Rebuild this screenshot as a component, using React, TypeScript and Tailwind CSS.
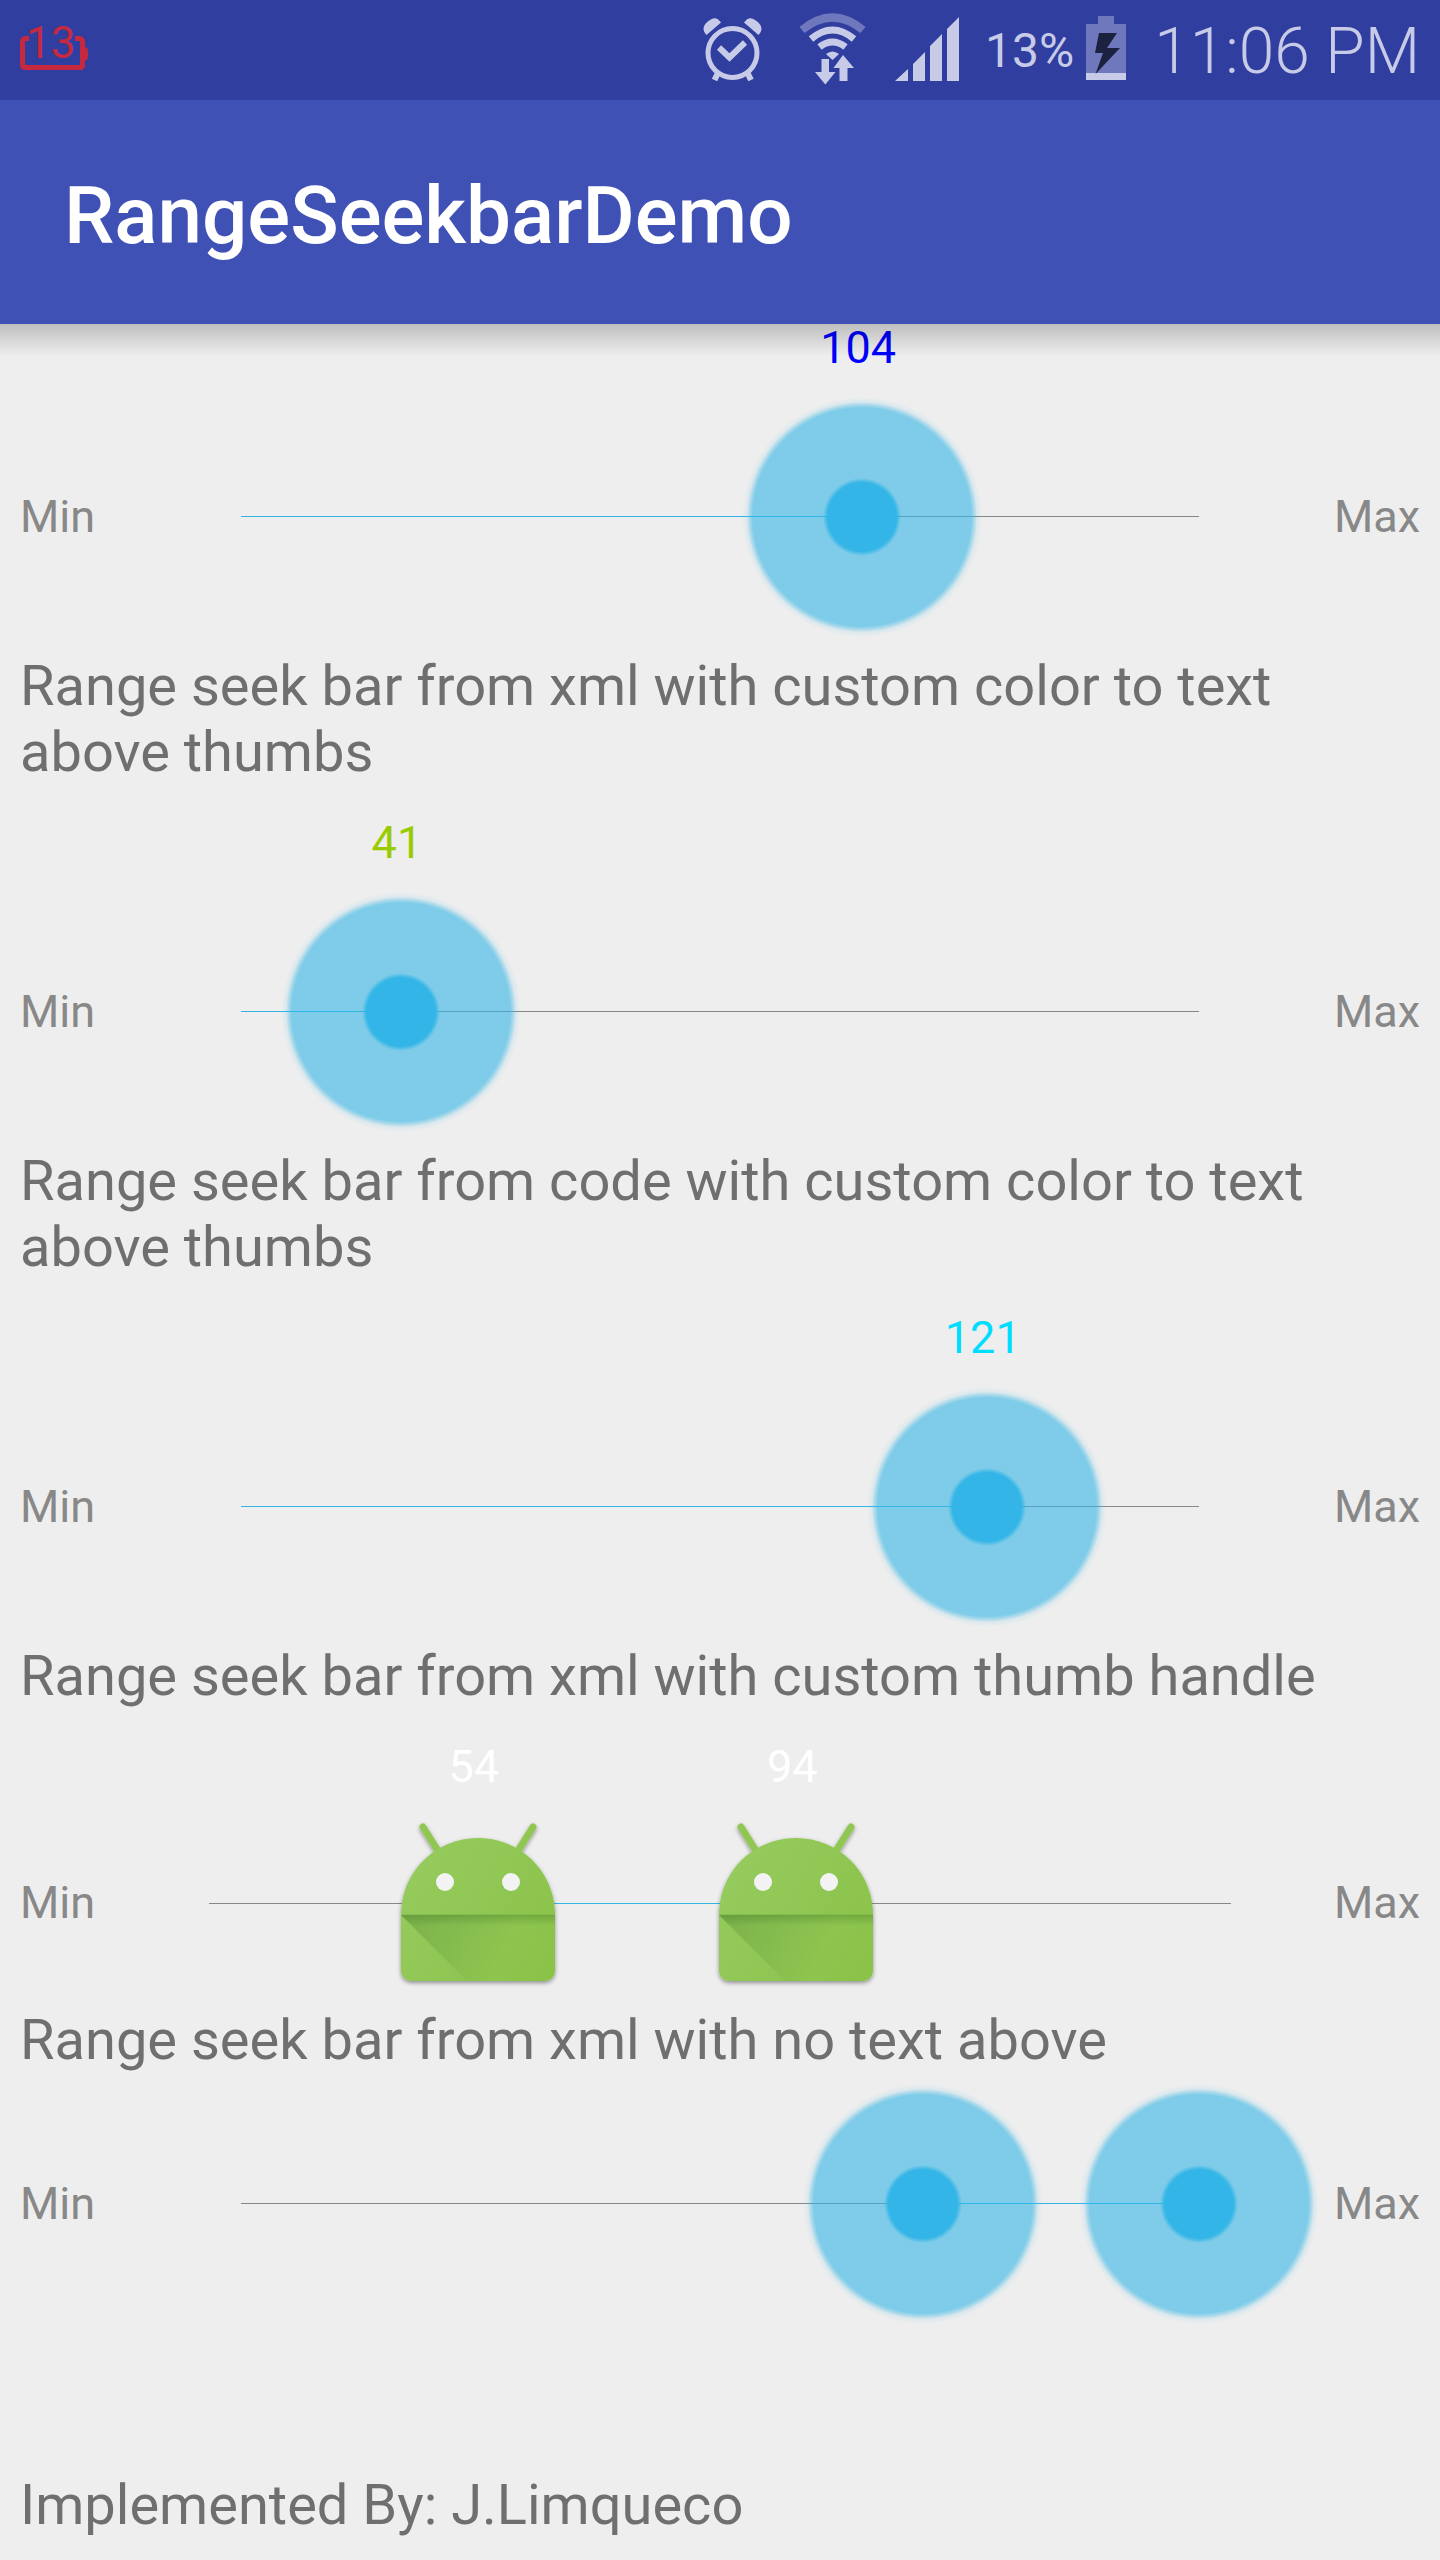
import { useState } from "react";

type ThumbKind = "circle" | "android";

function CircleThumb() {
  return (
    <svg width="240" height="240" viewBox="0 0 240 240" aria-hidden="true">
      <defs>
        <radialGradient id="halo" gradientUnits="userSpaceOnUse" cx="120" cy="120" r="120">
          <stop offset="0.91" stopColor="#33b5e5" stopOpacity="0.6" />
          <stop offset="0.94" stopColor="#33b5e5" stopOpacity="0.32" />
          <stop offset="0.96" stopColor="#33b5e5" stopOpacity="0.1" />
          <stop offset="1" stopColor="#33b5e5" stopOpacity="0" />
        </radialGradient>
        <radialGradient id="core" gradientUnits="userSpaceOnUse" cx="120" cy="120" r="39">
          <stop offset="0.88" stopColor="#33b5e7" stopOpacity="1" />
          <stop offset="1" stopColor="#33b5e7" stopOpacity="0" />
        </radialGradient>
      </defs>
      <circle cx="120" cy="120" r="120" fill="url(#halo)" />
      <circle cx="120" cy="120" r="39" fill="url(#core)" />
    </svg>
  );
}

function AndroidThumb() {
  return (
    <svg width="196" height="192" viewBox="0 7 196 192" aria-hidden="true">
      <defs>
        <linearGradient id="body" gradientUnits="userSpaceOnUse" x1="22" y1="60" x2="175" y2="150">
          <stop offset="0" stopColor="#96cb5e" />
          <stop offset="1" stopColor="#8bc34a" />
        </linearGradient>
        <linearGradient id="fold" gradientUnits="userSpaceOnUse" x1="30" y1="115" x2="120" y2="160">
          <stop offset="0" stopColor="#33691e" stopOpacity="0.24" />
          <stop offset="1" stopColor="#33691e" stopOpacity="0" />
        </linearGradient>
        <linearGradient id="crease" x1="0" y1="0" x2="0" y2="1">
          <stop offset="0" stopColor="#33691e" stopOpacity="0.28" />
          <stop offset="1" stopColor="#33691e" stopOpacity="0" />
        </linearGradient>
        <filter id="drop" x="-10%" y="-10%" width="120%" height="125%">
          <feDropShadow dx="0" dy="2" stdDeviation="2" floodColor="#000" floodOpacity="0.4" />
        </filter>
      </defs>
      <g filter="url(#drop)">
        <path d="M43 27 60 54M153 27 136 54" stroke="#90c752" strokeWidth="7" strokeLinecap="round" />
        <path
          d="M21 115C21 72 55 38 98 38s77 34 77 77v56a10 10 0 0 1-10 10H31a10 10 0 0 1-10-10z"
          fill="url(#body)"
        />
      </g>
      <path d="M21 115H175V181H87z" fill="url(#fold)" />
      <path d="M21 115H175V126H32z" fill="url(#crease)" />
      <path d="M22 115H174" stroke="#6f9c3c" strokeOpacity="0.5" />
      <circle cx="65" cy="82" r="9" fill="#f3f3f3" />
      <circle cx="131" cy="82" r="9" fill="#f3f3f3" />
    </svg>
  );
}

interface SeekBarProps {
  name: string;
  initial: number[];
  kind?: ThumbKind;
  numberClass?: string;
  areaClass: string;
  trackClass: string;
}

const MIN = 20;
const MAX = 150;

function SeekBar({ name, initial, kind = "circle", numberClass, areaClass, trackClass }: SeekBarProps) {
  const [values, setValues] = useState(initial);
  const percent = (v: number) => ((v - MIN) / (MAX - MIN)) * 100;
  const start = values.length > 1 ? percent(values[0]) : 0;
  const end = percent(values[values.length - 1]);

  const change = (index: number, next: number) =>
    setValues((old) =>
      old.map((v, i) => {
        if (i !== index) return v;
        if (index === 0 && old.length > 1) return Math.min(next, old[1]);
        if (index === 1) return Math.max(next, old[0]);
        return next;
      }),
    );

  return (
    <div role="group" aria-label={name}>
      {numberClass && (
        <div className={`h-[90px] px-[104px] pt-[31px] text-[45px] leading-[54px] ${numberClass}`}>
          <div className={`relative h-[54px] ${trackClass}`}>
            {values.map((v, i) => (
              <output
                key={i}
                className="absolute top-0 -translate-x-1/2 pr-2"
                style={{ left: `${percent(v)}%` }}
              >
                {Math.floor(v)}
              </output>
            ))}
          </div>
        </div>
      )}
      <div className={`flex items-center px-5 text-[45px] leading-[54px] text-[#888888] ${areaClass}`}>
        <span className="w-[84px]">Min</span>
        <div className={`relative h-px flex-1 bg-[#888888] ${trackClass}`}>
          <div
            className="absolute inset-y-0 bg-[#33b5e5]"
            style={{ left: `${start}%`, right: `${100 - end}%` }}
          />
          {values.map((v, i) => (
            <div
              key={i}
              className="absolute top-1/2 -translate-x-1/2 -translate-y-1/2"
              style={{ left: `${percent(v)}%` }}
            >
              {kind === "circle" ? <CircleThumb /> : <AndroidThumb />}
            </div>
          ))}
          {values.map((v, i) => (
            <input
              key={i}
              type="range"
              min={MIN}
              max={MAX}
              step="any"
              value={v}
              aria-label={values.length > 1 ? (i === 0 ? `${name}, low` : `${name}, high`) : name}
              onChange={(e) => change(i, Number(e.target.value))}
              className="pointer-events-none absolute -inset-x-24 -top-24 h-48 cursor-pointer appearance-none opacity-0 [&::-webkit-slider-thumb]:pointer-events-auto [&::-webkit-slider-thumb]:size-48 [&::-webkit-slider-thumb]:appearance-none"
            />
          ))}
        </div>
        <span className="flex w-[84px] justify-end">Max</span>
      </div>
    </div>
  );
}

function Heading({ children }: { children: string }) {
  return <h2 className="px-5 text-[56px] leading-[66px] text-[#6f6f6f]">{children}</h2>;
}

function StatusBar() {
  return (
    <div className="flex h-[100px] items-center bg-[#303f9f] pr-5 pl-5 text-[#c8cbe7]">
      <div className="relative h-9 w-[68px] text-[#c62840]">
        <svg className="mt-1" width="68" height="35" viewBox="0 0 68 35" fill="none" aria-hidden="true">
          <path d="M9 2.500H5.500a3 3 0 0 0-3 3V29.500a2 2 0 0 0 2 2H60.500a2 2 0 0 0 2-2V5.500a3 3 0 0 0-3-3H55" stroke="currentColor" strokeWidth="5" />
          <path d="M64 10.500q4 1 4 4v6.500q0 3-4 4z" fill="currentColor" />
        </svg>
        <span className="absolute -top-3.5 left-1.5 text-[44px] leading-[50px]">13</span>
      </div>
      <div className="ml-auto flex items-center">
        <svg width="60" height="64" viewBox="0 0 60 64" fill="none" aria-label="Alarm" role="img">
          <circle cx="29.500" cy="35" r="24.500" stroke="currentColor" strokeWidth="5" />
          <path d="M16 29.500 26.500 39.500 42 24.500" stroke="currentColor" strokeWidth="6" />
          <path d="M3.500 17Q-4 9 7 2 13-2.500 18 4.500zM55.500 17Q63 9 52 2 46-2.500 41 4.500z" fill="currentColor" />
          <path d="M15 55 11.500 62M44.500 55 48 62" stroke="currentColor" strokeWidth="6" />
        </svg>
        <svg className="ml-9" width="68" height="74" viewBox="0 0 68 74" fill="none" aria-label="Wi-Fi" role="img">
          <path d="M3 17Q33.500-8 64 17" stroke="#6f78bc" strokeWidth="8" />
          <path d="M12 26Q33.500 8 55 26M20.500 34Q33.500 24 46.500 34" stroke="currentColor" strokeWidth="7" />
          <path d="M27 41Q33.500 36 40 41L33.500 47z" fill="currentColor" />
          <path d="M22.500 46h7.500v13h6.500L26.300 71.500 16 59h6.500z" fill="currentColor" />
          <path d="M40.500 68h8V55h6.500L44 42 34.500 55h6z" fill="currentColor" />
        </svg>
        <svg className="ml-7" width="66" height="66" viewBox="0 0 66 66" fill="currentColor" aria-label="Signal" role="img">
          <path d="M0 64 13 52V64zM18 64V47L30 35V64zM35 64V29L47 17V64zM52 64V12L64 0V64z" />
        </svg>
        <span className="ml-6 pt-0.5 text-[48px] leading-[56px]">13%</span>
        <svg className="ml-3" width="40" height="68" viewBox="0 0 40 68" aria-label="Charging" role="img">
          <path d="M12 0H28V8H40V57H0V8H12z" fill="#6f78bc" />
          <path d="M0 57H40V64H0z" fill="currentColor" />
          <path d="M13 17H31L21 32H34L9.500 58 17 37H9z" fill="#1c2140" />
        </svg>
        <span className="ml-7 pt-1 text-[64px] leading-[76px] font-light">11:06 PM</span>
      </div>
    </div>
  );
}

export default function App() {
  return (
    <div className="min-h-screen bg-[#eeeeee] pb-5 font-['Roboto',sans-serif]">
      <header className="relative z-10">
        <StatusBar />
        <div className="flex h-56 items-center bg-[#3f51b5] px-16 pt-2">
          <h1 className="text-[80px] leading-[94px] font-medium text-white">RangeSeekbarDemo</h1>
        </div>
        <div className="pointer-events-none absolute inset-x-0 top-full h-8 bg-linear-to-b from-black/20 via-black/10 to-transparent" />
      </header>
      <main className="-mt-[34px]">
        <SeekBar
          name="Range seek bar"
          initial={[104.3]}
          numberClass="text-[#0000ff]"
          areaClass="h-[273px]"
          trackClass="mx-[137px]"
        />
        <Heading>Range seek bar from xml with custom color to text above thumbs</Heading>
        <SeekBar
          name="Custom color from xml"
          initial={[41.7]}
          numberClass="text-[#99cc00]"
          areaClass="h-[273px]"
          trackClass="mx-[137px]"
        />
        <Heading>Range seek bar from code with custom color to text above thumbs</Heading>
        <SeekBar
          name="Custom color from code"
          initial={[121.2]}
          numberClass="text-[#00ddff]"
          areaClass="h-[273px]"
          trackClass="mx-[137px]"
        />
        <Heading>Range seek bar from xml with custom thumb handle</Heading>
        <SeekBar
          name="Custom thumb handle"
          initial={[54.2, 94.7]}
          kind="android"
          numberClass="text-white"
          areaClass="h-[208px]"
          trackClass="mx-[105px]"
        />
        <Heading>Range seek bar from xml with no text above</Heading>
        <SeekBar
          name="No text above"
          initial={[112.6, 150]}
          areaClass="h-[261px]"
          trackClass="mx-[137px]"
        />
      </main>
      <footer className="mt-[138px] px-5 text-[56px] leading-[66px] text-[#6f6f6f]">
        Implemented By: J.Limqueco
      </footer>
    </div>
  );
}
